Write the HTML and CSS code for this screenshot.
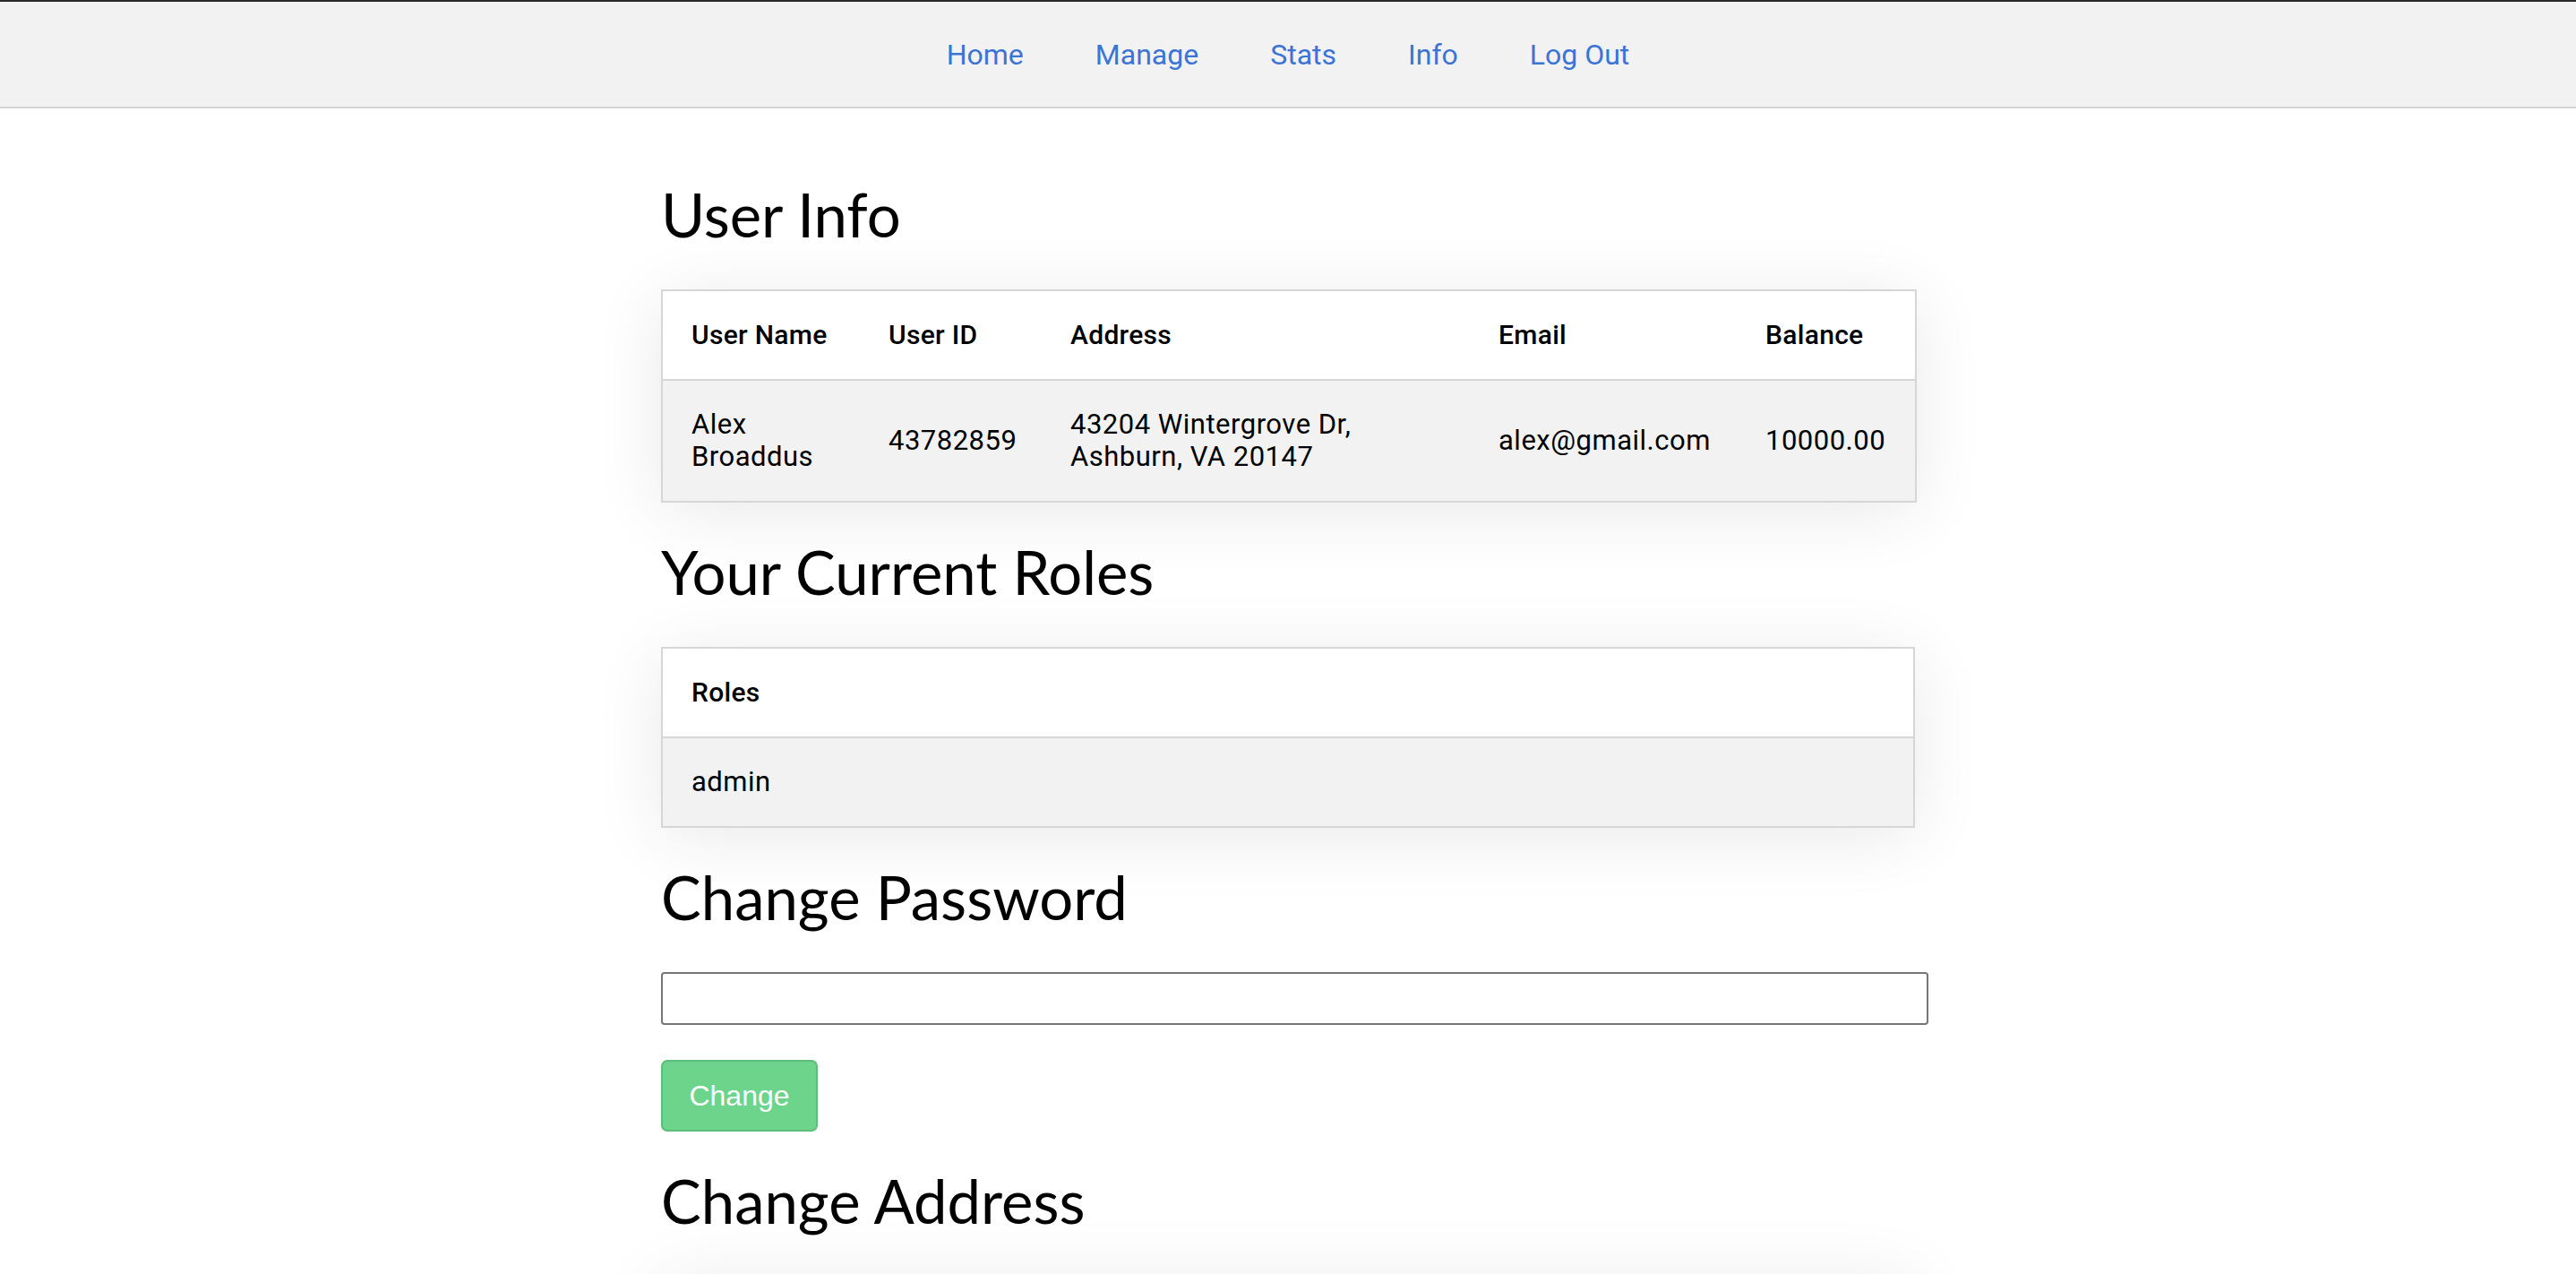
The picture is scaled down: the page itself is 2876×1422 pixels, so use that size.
FILE: index.html
```html
<!DOCTYPE html>
<html lang="en">
<head>
<meta charset="utf-8">
<title>User Info</title>
<link rel="stylesheet" href="styles.css">
</head>
<body>
<div class="frame-top"></div>
<nav class="nav">
  <a class="nav-link" href="#">Home</a>
  <a class="nav-link" href="#">Manage</a>
  <a class="nav-link" href="#">Stats</a>
  <a class="nav-link" href="#">Info</a>
  <a class="nav-link" href="#">Log Out</a>
</nav>
<main class="content">
  <h1 class="section-title">User Info</h1>
  <table class="data-table">
    <colgroup>
      <col class="c-name"><col class="c-id"><col class="c-addr"><col class="c-email"><col class="c-bal">
    </colgroup>
    <thead>
      <tr><th>User Name</th><th>User ID</th><th>Address</th><th>Email</th><th>Balance</th></tr>
    </thead>
    <tbody>
      <tr><td>Alex Broaddus</td><td>43782859</td><td>43204 Wintergrove Dr, Ashburn, VA 20147</td><td>alex@gmail.com</td><td>10000.00</td></tr>
    </tbody>
  </table>

  <h1 class="section-title">Your Current Roles</h1>
  <table class="data-table">
    <thead><tr><th>Roles</th></tr></thead>
    <tbody><tr><td>admin</td></tr></tbody>
  </table>

  <h1 class="section-title">Change Password</h1>
  <form class="pw-form">
    <input class="text-input" type="password">
    <button class="btn-change" type="button">Change</button>
  </form>

  <h1 class="section-title">Change Address</h1>
  <div class="address-box"></div>
</main>
</body>
</html>
```
FILE: styles.css
```css
html, body {
  margin: 0;
  padding: 0;
  background: #ffffff;
}
body {
  font-family: Roboto, "Liberation Sans", sans-serif;
  color: #000;
}
.frame-top {
  height: 2px;
  background: #2a2a2a;
}
.nav {
  height: 117px;
  background: #f2f2f2;
  border-bottom: 2px solid #d4d4d4;
  display: flex;
  justify-content: center;
  align-items: center;
  gap: 80px;
}
.nav-link {
  font-family: Roboto, sans-serif;
  font-size: 32px;
  color: #3c74d6;
  text-decoration: none;
}
.content {
  width: 1400px;
  margin: 0 auto;
  padding-top: 41px;
}
.section-title {
  font-family: Lato, "Open Sans", sans-serif;
  font-weight: 400;
  font-size: 67px;
  line-height: 80px;
  margin: 37px 0 44px;
  color: #000;
}
.data-table {
  width: 1400px;
  border-collapse: collapse;
  table-layout: fixed;
  box-shadow: 0 10px 80px rgba(0, 0, 0, 0.09);
  font-size: 31px;
  letter-spacing: 0.5px;
  line-height: 36px;
}
.data-table th,
.data-table td {
  text-align: left;
  padding: 31px 32px;
  border-top: 2px solid #d6d6d6;
  border-bottom: 2px solid #d6d6d6;
}
.data-table th:first-child,
.data-table td:first-child {
  border-left: 2px solid #d6d6d6;
}
.data-table th:last-child,
.data-table td:last-child {
  border-right: 2px solid #d6d6d6;
}
.data-table th {
  font-weight: 500;
  font-size: 30px;
  letter-spacing: 0.3px;
  white-space: nowrap;
  background: #ffffff;
}
.data-table td {
  font-weight: 400;
  background: #f2f2f2;
}
.c-name { width: 221px; }
.c-id { width: 203px; }
.c-addr { width: 478px; }
.c-email { width: 298px; }
.c-bal { width: 200px; }
.pw-form {
  display: flex;
  flex-direction: column;
  align-items: flex-start;
  gap: 39px;
  margin: 0;
}
.text-input {
  box-sizing: border-box;
  width: 1415px;
  height: 59px;
  border: 2px solid #767676;
  border-radius: 4px;
  background: #fff;
  padding: 0 8px;
  margin: 0;
  font-size: 30px;
}
.btn-change {
  box-sizing: border-box;
  width: 175px;
  height: 80px;
  background: #6dd48c;
  border: 2px solid #5dbd7a;
  border-radius: 7px;
  color: #ffffff;
  font-family: "Liberation Sans", Arial, sans-serif;
  font-size: 32px;
  padding: 0;
  margin: 0;
}
.address-box {
  height: 300px;
  box-shadow: 0 10px 80px rgba(0, 0, 0, 0.09);
  background: #fff;
  border: 2px solid #d6d6d6;
}
```
